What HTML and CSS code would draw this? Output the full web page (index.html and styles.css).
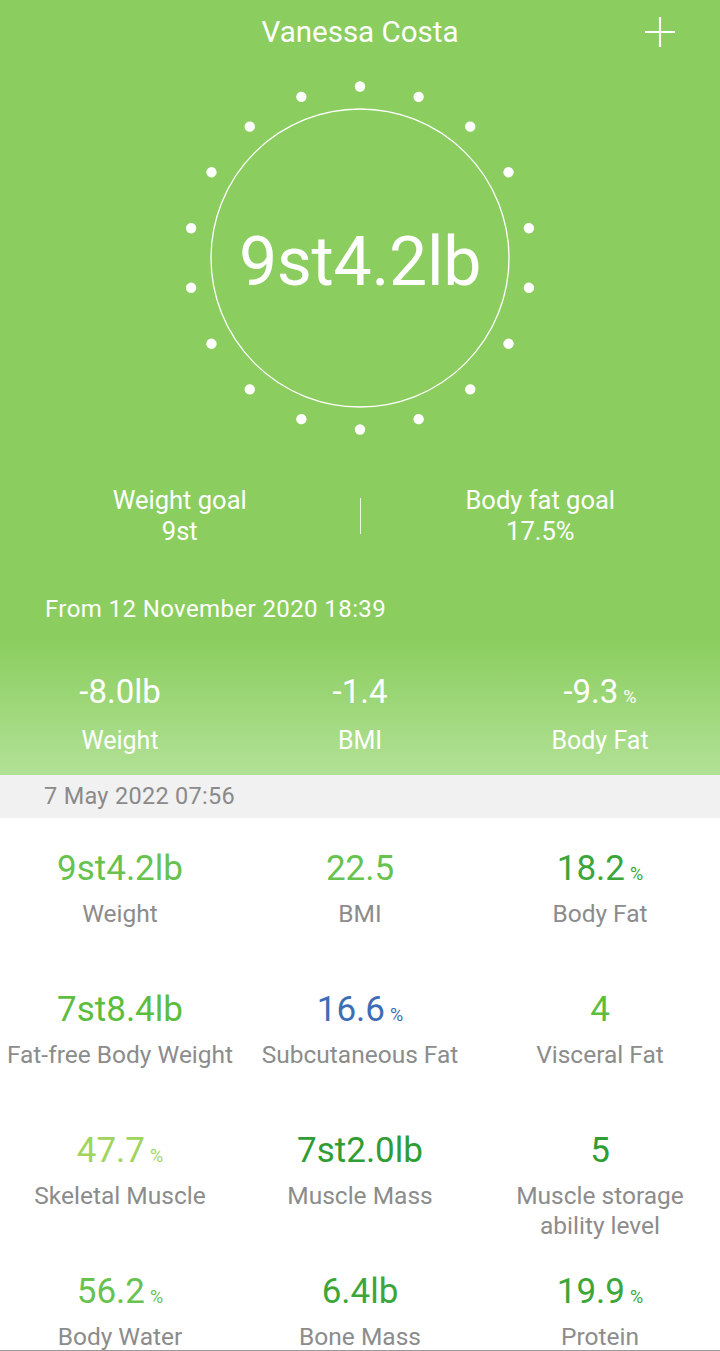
FILE: index.html
```html
<!DOCTYPE html>
<html lang="en">
<head>
<meta charset="UTF-8" />
<meta name="viewport" content="width=device-width, initial-scale=1" />
<title>Vanessa Costa</title>
<link rel="stylesheet" href="styles.css">
</head>
<body>

<div class="screen">
  <header class="top">
    <div class="title-bar">
      <h1 class="title">Vanessa Costa</h1>
      <button class="add-btn" aria-label="Add">
        <svg width="32" height="32" viewBox="0 0 32 32"><path d="M16 1v30M1 16h30" stroke="#fff" stroke-width="2.2" fill="none"/></svg>
      </button>
    </div>

    <div class="dial">
      <svg class="dial-art" width="360" height="360" viewBox="0 0 360 360">
        <circle cx="180" cy="180" r="149" fill="none" stroke="#fff" stroke-width="1.3"/>
        <g fill="#fff">
          <circle cx="180" cy="8.5" r="5.2"/>
          <circle cx="180" cy="8.5" r="5.2" transform="rotate(20 180 180)"/>
          <circle cx="180" cy="8.5" r="5.2" transform="rotate(40 180 180)"/>
          <circle cx="180" cy="8.5" r="5.2" transform="rotate(60 180 180)"/>
          <circle cx="180" cy="8.5" r="5.2" transform="rotate(80 180 180)"/>
          <circle cx="180" cy="8.5" r="5.2" transform="rotate(100 180 180)"/>
          <circle cx="180" cy="8.5" r="5.2" transform="rotate(120 180 180)"/>
          <circle cx="180" cy="8.5" r="5.2" transform="rotate(140 180 180)"/>
          <circle cx="180" cy="8.5" r="5.2" transform="rotate(160 180 180)"/>
          <circle cx="180" cy="8.5" r="5.2" transform="rotate(180 180 180)"/>
          <circle cx="180" cy="8.5" r="5.2" transform="rotate(200 180 180)"/>
          <circle cx="180" cy="8.5" r="5.2" transform="rotate(220 180 180)"/>
          <circle cx="180" cy="8.5" r="5.2" transform="rotate(240 180 180)"/>
          <circle cx="180" cy="8.5" r="5.2" transform="rotate(260 180 180)"/>
          <circle cx="180" cy="8.5" r="5.2" transform="rotate(280 180 180)"/>
          <circle cx="180" cy="8.5" r="5.2" transform="rotate(300 180 180)"/>
          <circle cx="180" cy="8.5" r="5.2" transform="rotate(320 180 180)"/>
          <circle cx="180" cy="8.5" r="5.2" transform="rotate(340 180 180)"/>
        </g>
      </svg>
      <div class="dial-value">9st4.2lb</div>
    </div>

    <div class="goals">
      <div class="goal">
        <div>Weight goal</div>
        <div>9st</div>
      </div>
      <div class="goal-divider"></div>
      <div class="goal">
        <div>Body fat goal</div>
        <div>17.5%</div>
      </div>
    </div>

    <p class="since">From 12 November 2020 18:39</p>

    <div class="diffs">
      <div class="diff">
        <div class="diff-value">-8.0lb</div>
        <div class="diff-label">Weight</div>
      </div>
      <div class="diff">
        <div class="diff-value">-1.4</div>
        <div class="diff-label">BMI</div>
      </div>
      <div class="diff">
        <div class="diff-value">-9.3<span class="unit">%</span></div>
        <div class="diff-label">Body Fat</div>
      </div>
    </div>
  </header>

  <div class="date-bar">7 May 2022 07:56</div>

  <section class="metrics">
    <div class="metric">
      <div class="metric-value c-light">9st4.2lb</div>
      <div class="metric-label">Weight</div>
    </div>
    <div class="metric">
      <div class="metric-value c-light">22.5</div>
      <div class="metric-label">BMI</div>
    </div>
    <div class="metric">
      <div class="metric-value c-mid">18.2<span class="unit">%</span></div>
      <div class="metric-label">Body Fat</div>
    </div>

    <div class="metric">
      <div class="metric-value c-green">7st8.4lb</div>
      <div class="metric-label">Fat-free Body Weight</div>
    </div>
    <div class="metric">
      <div class="metric-value c-blue">16.6<span class="unit">%</span></div>
      <div class="metric-label">Subcutaneous Fat</div>
    </div>
    <div class="metric">
      <div class="metric-value c-green">4</div>
      <div class="metric-label">Visceral Fat</div>
    </div>

    <div class="metric">
      <div class="metric-value c-lime">47.7<span class="unit">%</span></div>
      <div class="metric-label">Skeletal Muscle</div>
    </div>
    <div class="metric">
      <div class="metric-value c-dark">7st2.0lb</div>
      <div class="metric-label">Muscle Mass</div>
    </div>
    <div class="metric">
      <div class="metric-value c-dark">5</div>
      <div class="metric-label">Muscle storage<br>ability level</div>
    </div>

    <div class="metric">
      <div class="metric-value c-light">56.2<span class="unit">%</span></div>
      <div class="metric-label">Body Water</div>
    </div>
    <div class="metric">
      <div class="metric-value c-mid">6.4lb</div>
      <div class="metric-label">Bone Mass</div>
    </div>
    <div class="metric">
      <div class="metric-value c-mid">19.9<span class="unit">%</span></div>
      <div class="metric-label">Protein</div>
    </div>
  </section>
</div>

</body>
</html>
```

FILE: styles.css
```css
* { box-sizing: border-box; }
body { margin: 0; font-family: Roboto, "Noto Sans", Arial, sans-serif; background: #fff; }
.screen { width: 720px; height: 1351px; overflow: hidden; border-bottom: 1px solid #9a9a9a; }

.top {
  color: #fff;
  height: 775px;
  background: linear-gradient(to bottom, #8bce5f 0, #8bce5f 640px, #b2e196 775px);
}
.title-bar { position: relative; height: 64px; display: flex; align-items: center; justify-content: center; }
.title { margin: 0; font-size: 29.5px; font-weight: 400; }
.add-btn { position: absolute; right: 44px; top: 16px; width: 32px; height: 32px; padding: 0; border: 0; background: none; }
.add-btn svg { display: block; }

.dial { position: relative; width: 360px; height: 360px; margin: 14px auto 0; display: flex; align-items: center; justify-content: center; }
.dial-art { position: absolute; left: 0; top: 0; }
.dial-value { position: relative; font-size: 68px; font-weight: 400; letter-spacing: -0.3px; margin-top: 8px; }

.goals { display: flex; align-items: center; margin-top: 47px; }
.goal { flex: 1; text-align: center; font-size: 25.5px; line-height: 31px; }
.goal-divider { width: 1px; height: 36px; background: rgba(255,255,255,0.8); }

.since { margin: 47px 0 0 45px; font-size: 24px; line-height: 30px; letter-spacing: 0.4px; }

.diffs { display: grid; grid-template-columns: repeat(3, 1fr); margin-top: 48px; text-align: center; }
.diff-value { font-size: 33px; line-height: 40px; height: 40px; }
.diff-label { font-size: 25px; line-height: 30px; margin-top: 14px; }

.unit { font-size: 18px; line-height: 1; margin-left: 5px; }

.date-bar { height: 43px; background: #f1f1f1; color: #8a8a8a; font-size: 23.5px; line-height: 43px; padding-left: 44px; letter-spacing: 0.3px; }

.metrics { display: grid; grid-template-columns: repeat(3, 1fr); grid-auto-rows: 141px; padding-top: 31px; text-align: center; }
.metric-value { font-size: 35px; line-height: 40px; height: 40px; }
.metric-label { font-size: 24.5px; line-height: 30px; margin-top: 10px; color: #8c8c8c; }

.c-light { color: #68c24f; }
.c-mid { color: #3ca63b; }
.c-green { color: #5dbd3e; }
.c-blue { color: #3f6db5; }
.c-lime { color: #a1d45c; }
.c-dark { color: #2f9d33; }
```
